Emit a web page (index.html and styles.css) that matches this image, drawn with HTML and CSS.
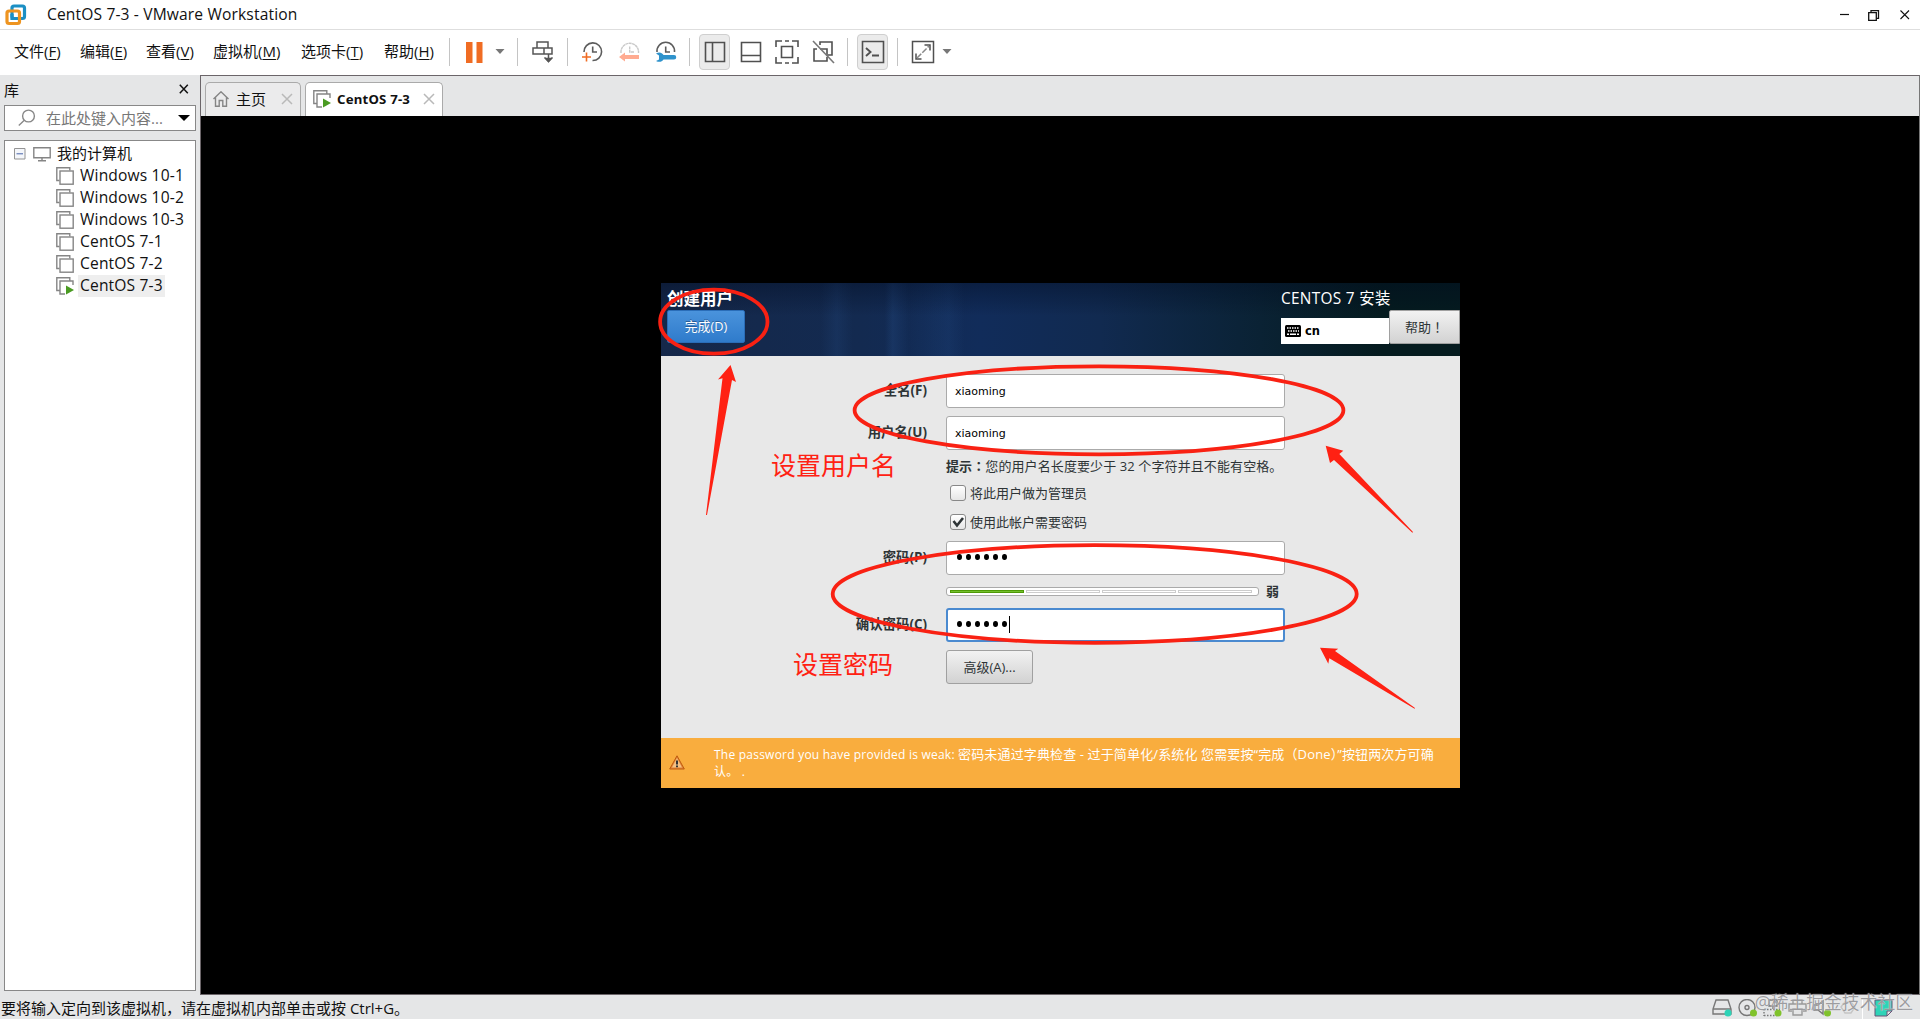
FILE: index.html
```html
<!DOCTYPE html>
<html lang="zh-CN">
<head>
    <meta charset="UTF-8">
    <meta name="viewport" content="width=device-width, initial-scale=1.0">
    <title>CentOS 7-3 - VMware Workstation</title>
    <link rel="stylesheet" href="styles.css">
</head>
<body>
    <svg width="0" height="0" class="defs">
        <symbol id="vm" viewBox="0 0 18 18">
            <path d="M3.5 13.5H.8V.8h13v2.7" fill="none" stroke="#858585" stroke-width="1.4"/>
            <rect x="4" y="4" width="13.2" height="13.2" fill="#fff" stroke="#858585" stroke-width="1.4"/>
        </symbol>
        <symbol id="vm-on" viewBox="0 0 18 18">
            <path d="M3.5 13.5H.8V.8h13v2.7M9 17H4V4h13v4" fill="none" stroke="#858585" stroke-width="1.4"/>
            <path d="M10 8.5l8 4.5-8 4.5z" fill="#4a9b22"/>
        </symbol>
    </svg>

    <header class="titlebar">
        <svg class="logo" width="22" height="22" viewBox="0 0 22 22" fill="none" stroke-width="3.2">
            <rect x="7" y="2" width="12.5" height="12.5" rx="2" stroke="#1b8fc4"/>
            <rect x="2" y="7" width="12.5" height="12.5" rx="2" stroke="#ee9420"/>
            <path d="M7 10v4.500h5" stroke="#1b8fc4"/>
        </svg>
        <span class="title">CentOS 7-3 - VMware Workstation</span>
        <svg class="window-btns" width="72" height="14" viewBox="0 0 72 14" fill="none" stroke="#111">
            <path d="M0 6.500h9" stroke-width="1.2"/>
            <path d="M28.700 4.700h7.600v7.600h-7.600zM31 4.500V2.700h7.500v7.600h-2" stroke-width="1.3"/>
            <path d="M60.500 2.500l8.500 8.500M69 2.500l-8.500 8.500" stroke-width="1.1"/>
        </svg>
    </header>

    <div class="menubar">
        <nav class="menu">
            <span class="m66">文件(<u>F</u>)</span>
            <span class="m66">编辑(<u>E</u>)</span>
            <span class="m67">查看(<u>V</u>)</span>
            <span class="m88">虚拟机(<u>M</u>)</span>
            <span class="m83">选项卡(<u>T</u>)</span>
            <span class="m65">帮助(<u>H</u>)</span>
        </nav>
        <div class="toolbar">
            <i class="sep"></i>
            <svg class="gap-16" width="17" height="21" fill="#f06c23"><path d="M0 0h6.500v21H0zM10.500 0h6v21h-6z"/></svg>
            <svg class="gap-12" width="10" height="6" fill="#777"><path d="M.5 0h9L5 5z"/></svg>
            <i class="sep gap-12"></i>
            <svg class="gap-14" width="22" height="22" fill="none" stroke="#555" stroke-width="1.5">
                <path d="M5 7V1h11v6M1 7h11v6H1zM12 7h8v6h-8M16.500 13v7M12.500 16.500l4 4 4-4"/>
                <path d="M14 17.500h5l-2.500 3z" fill="#555"/>
            </svg>
            <i class="sep gap-13"></i>
            <svg class="gap-14" width="22" height="22" fill="none" stroke="#5c5c5c" stroke-width="1.6">
                <path d="M2 11a8.800 8.800 0 1 1 8.500 8.500M10.700 5.500V11H15"/>
                <path d="M0 16h9M4.500 11.500v9" stroke="#f06c23"/>
            </svg>
            <svg class="gap-15" width="22" height="22" fill="none" stroke="#c9c9c9" stroke-width="1.4">
                <path d="M2 12a8.800 8.800 0 1 1 17.500 0M10.700 5.500V11H15" stroke-dasharray="3 .4"/>
                <path d="M0 16l6-4.500V14h14v4H6v2.500z" fill="#ffab91" stroke="none"/>
            </svg>
            <svg class="gap-14" width="22" height="22" fill="none" stroke="#5c5c5c" stroke-width="1.6">
                <path d="M2 11a8.800 8.800 0 1 1 17.500 0M10.700 5.500V11H15"/>
                <path d="M1 12.500c3-2 6-1 7.500 1.500H19a2 2 0 0 1 0 4.500H8.500c-1.500 2.500-4.500 3-7.500 1.500l3-1.500v-4z" fill="#2f93cc" stroke="none"/>
            </svg>
            <i class="sep gap-12"></i>
            <span class="pressed gap-9">
                <svg width="22" height="22" fill="none" stroke="#505050" stroke-width="1.6"><path d="M1.500 1.500h19v19h-19zM8.500 1.500v19"/></svg>
            </span>
            <svg class="gap-10" width="22" height="22" fill="none" stroke="#505050" stroke-width="1.6"><path d="M1.500 1.500h19v19h-19zM1.500 14.500h19"/></svg>
            <svg class="gap-13" width="24" height="24" fill="none" stroke="#505050" stroke-width="1.6"><path d="M1 7V1h6M10 1h4M17 1h6v6M23 17v6h-6M14 23h-4M7 23H1v-6M6.500 6.500h11v11h-11z"/></svg>
            <svg class="gap-13" width="23" height="24" fill="none" stroke="#505050" stroke-width="1.6">
                <path d="M8 5V2h12v13h-4M5 9H2v12h13v-4M8 9h7v7"/>
                <path d="M1 1l21 22" stroke="#777"/>
            </svg>
            <i class="sep gap-12"></i>
            <span class="pressed gap-9">
                <svg width="24" height="24" fill="none" stroke="#505050" stroke-width="1.6"><path d="M1.500 1.500h21v21h-21z"/><path d="M5 8l4.500 4L5 16M11 15.500h7" stroke-width="1.900"/></svg>
            </span>
            <i class="sep gap-9"></i>
            <svg class="gap-13" width="24" height="24" fill="none" stroke="#505050" stroke-width="1.5"><path d="M1.500 1.500h21v21h-21z"/><path d="M13.500 5h5.500v5.500M5 13.500V19h5.500"/><path d="M6 18L18 6" stroke="#888" stroke-dasharray="6 1.500"/></svg>
            <svg class="gap-7" width="10" height="6" fill="#777"><path d="M.5 0h9L5 5z"/></svg>
        </div>
    </div>

    <div class="workspace">
        <aside class="sidebar">
            <div class="side-head">
                <span>库</span>
                <svg width="10" height="10" stroke="#111" stroke-width="1.5"><path d="M.8.8l8 8.400M8.800.8l-8 8.400"/></svg>
            </div>
            <div class="search">
                <svg width="18" height="18" fill="none" stroke="#888" stroke-width="1.4"><circle cx="10.500" cy="7" r="5.900"/><path d="M6.300 11.300L.8 16.500"/></svg>
                <span>在此处键入内容...</span>
                <svg class="drop" width="12" height="6"><path d="M0 0h12L6 6z"/></svg>
            </div>
            <div class="tree">
                <div class="node root">
                    <svg width="12" height="12" fill="#f4f6fa" stroke="#949494"><path d="M.5.5h10.500v10.500H.5z"/><path d="M2.500 5.800h6.500" stroke="#4864a8"/></svg>
                    <svg class="pc" width="18" height="15" fill="none" stroke="#858585" stroke-width="1.4"><path d="M.8.8h16.400v10H.8zM9 11v2.500M5 13.800h8"/></svg>
                    <span>我的计算机</span>
                </div>
                <div class="node"><svg width="18" height="18"><use href="#vm"/></svg><span>Windows 10-1</span></div>
                <div class="node"><svg width="18" height="18"><use href="#vm"/></svg><span>Windows 10-2</span></div>
                <div class="node"><svg width="18" height="18"><use href="#vm"/></svg><span>Windows 10-3</span></div>
                <div class="node"><svg width="18" height="18"><use href="#vm"/></svg><span>CentOS 7-1</span></div>
                <div class="node"><svg width="18" height="18"><use href="#vm"/></svg><span>CentOS 7-2</span></div>
                <div class="node"><svg width="18" height="18"><use href="#vm-on"/></svg><span class="selected">CentOS 7-3</span></div>
            </div>
        </aside>

        <main class="main">
            <div class="tabs">
                <div class="tab home">
                    <svg width="16" height="16" fill="none" stroke="#858585" stroke-width="1.4"><path d="M.5 8L8 .8 15.500 8M2.500 6.500v8.700h3.700V9.500h3.600v5.700h3.700V6.500"/></svg>
                    <span>主页</span>
                    <svg class="x" width="12" height="12" stroke="#b9b9b9" stroke-width="1.500"><path d="M1 1l10 10M11 1L1 11"/></svg>
                </div>
                <div class="tab active">
                    <svg width="18" height="18"><use href="#vm-on"/></svg>
                    <span>CentOS 7-3</span>
                    <svg class="x" width="12" height="12" stroke="#b9b9b9" stroke-width="1.500"><path d="M1 1l10 10M11 1L1 11"/></svg>
                </div>
            </div>

            <div class="screen">
                <div class="installer">
                    <div class="banner">
                        <div class="banner-left">
                            <h1>创建用户</h1>
                            <button class="done">完成(D)</button>
                        </div>
                        <div class="banner-right">
                            <div class="product">CENTOS 7 安装</div>
                            <div class="lang-row">
                                <div class="layout">
                                    <svg width="16" height="12"><rect width="16" height="12" rx="1.500"/><path d="M2 3h12M3 6h11" stroke="#fff" stroke-width="1.600" stroke-dasharray="1.500 1"/><path d="M2 9.300h2M5 9.300h6M12 9.300h2" stroke="#fff" stroke-width="1.500"/></svg>
                                    <b>cn</b>
                                </div>
                                <button class="help">帮助<span class="mid" lang="zh-TW">！</span></button>
                            </div>
                        </div>
                    </div>

                    <div class="form">
                        <div class="row"><label>全名(F)</label><div class="input">xiaoming</div></div>
                        <div class="row user"><label>用户名(U)</label><div class="input">xiaoming</div></div>
                        <p class="hint"><b>提示<span class="mid" lang="zh-TW">：</span></b>您的用户名长度要少于 32 个字符并且不能有空格。</p>
                        <div class="check"><i></i><span>将此用户做为管理员</span></div>
                        <div class="check second">
                            <i><svg width="14" height="14" fill="none" stroke="#2e3436" stroke-width="2.600"><path d="M2.500 6l3.500 4.500L12 3"/></svg></i>
                            <span>使用此帐户需要密码</span>
                        </div>
                        <div class="row pass"><label>密码(P)</label><div class="input dots"><s></s><s></s><s></s><s></s><s></s><s></s></div></div>
                        <div class="strength">
                            <div class="meter"><i class="on"></i><i></i><i></i><i></i></div>
                            <b>弱</b>
                        </div>
                        <div class="row confirm"><label>确认密码(C)</label><div class="input dots focus"><s></s><s></s><s></s><s></s><s></s><s></s><em></em></div></div>
                        <button class="advanced">高级(A)...</button>
                    </div>

                    <div class="warning">
                        <svg width="16" height="15"><path d="M8 .8L15.300 14H.7z" fill="#e58634" stroke="#bd5b13"/><path d="M8 3l5 9.500H3z" fill="#f3c084"/><path d="M7 5.500h2v4H7zM7 10.500h2v1.800H7z" fill="#333"/></svg>
                        <p>The password you have provided is weak: <span class="zh">密码未通过字典检查 - 过于简单化/系统化 您需要按“完成（Done）”按钮两次方可确</span><br>认。 .</p>
                    </div>
                </div>

                <!-- hand-drawn marks over the guest screen -->
                <svg class="marks" width="760" height="440" viewBox="655 283 760 440">
                    <g fill="none" stroke="#f92113" stroke-width="3.800">
                        <ellipse cx="713.800" cy="321.700" rx="53.700" ry="32"/>
                        <ellipse cx="1099" cy="410.300" rx="244.400" ry="44"/>
                        <ellipse cx="1094.700" cy="594" rx="262" ry="48.800"/>
                    </g>
                    <g fill="#ff2113">
                        <path d="M730.500 365L718 379.500l4.500-1.200L706 515h1L732 380l4 2z"/>
                        <path d="M1325.700 445.700l17.600 5-4 3.300 73.700 78-.6.700L1334 460l-4 3z"/>
                        <path d="M1320 647.700l18.300 1-3.300 2.300 80 57-.4.700-85.300-50.400-1 5.400z"/>
                    </g>
                </svg>
                <span class="note note-user">设置用户名</span>
                <span class="note note-pass">设置密码</span>
            </div>
        </main>
    </div>

    <footer class="statusbar">
        <span>要将输入定向到该虚拟机，请在虚拟机内部单击或按 Ctrl+G。</span>
        <div class="devices">
            <svg width="21" height="18" fill="none" stroke="#777" stroke-width="1.400"><path d="M4 1h12l3 9v5H1v-5zM1 10h18"/><circle cx="16" cy="14" r="3.500" fill="#2ed3b7" stroke="none"/></svg>
            <svg width="20" height="18" fill="none" stroke="#777" stroke-width="1.400"><circle cx="9" cy="8.500" r="8"/><circle cx="9" cy="8.500" r="2"/><circle cx="15.500" cy="14" r="3.500" fill="#80c22c" stroke="none"/></svg>
            <svg width="20" height="18" fill="none" stroke="#777" stroke-width="1.400"><path d="M6 1h8v6H6zM10 7v3"/><path d="M1 10.500h16M1 16.500h13M1 10v7" stroke-dasharray="1.500 1.500"/><circle cx="15" cy="14" r="3.500" fill="#80c22c" stroke="none"/></svg>
            <svg width="20" height="18" fill="none" stroke="#999" stroke-width="1.400"><path d="M5 5V1h9v4M4 12H1V5h17v7h-3M5 10h9v6H5z"/></svg>
            <svg width="20" height="18" fill="none" stroke="#777" stroke-width="1.400"><path d="M1 6h4l5-4v13l-5-4H1z"/><circle cx="14.500" cy="14" r="3.500" fill="#80c22c" stroke="none"/></svg>
            <svg width="20" height="18" fill="none" stroke="#c5c5c5" stroke-width="1.400"><path d="M3 8l4-5h6l4 5-4 6H7z"/></svg>
            <i></i>
            <svg width="19" height="18" fill="#2ed3b7" stroke="#657" stroke-width="1"><path d="M1 1h17v11l-5 5H1zM18 12h-5v5"/></svg>
        </div>
        <span class="watermark"><span>@</span>稀土掘金技术社区</span>
    </footer>
</body>
</html>
```

FILE: styles.css
```css
* { box-sizing: border-box; }
body{
    margin: 0;
    width: 1920px;
    height: 1019px;
    overflow: hidden;
    display: flex;
    flex-direction: column;
    background-color: #e5e6e7;
    color: #111;
    font-family: "Open Sans", "Noto Sans CJK SC", sans-serif;
    font-size: 15px;
    white-space: nowrap;
}
svg{
    display: block;
    flex: none;
}
button{
    padding: 0;
    font-family: inherit;
}
.defs { position: absolute; }

/* title */
.titlebar{
    height: 30px;
    display: flex;
    align-items: center;
    padding: 0 8px 0 5px;
    background-color: #fff;
    border-bottom: 1px solid #dedede;
}
.title{
    margin-left: 20px;
    padding-bottom: 2px;
    font-size: 15.6px;
    letter-spacing: .14px;
}
.window-btns { margin-left: auto; }

/* menu + toolbar */
.menubar{
    height: 45px;
    display: flex;
    background-color: #fff;
}
.menu{
    display: flex;
    align-items: center;
    padding: 0 0 4px 14px;
}
.menu u { text-underline-offset: 2px; }
.m66 { width: 66px; }
.m67 { width: 67px; }
.m88 { width: 88px; }
.m83 { width: 83px; }
.m65 { width: 65px; }
.toolbar{
    display: flex;
    align-items: center;
    height: 44px;
}
.sep{
    width: 1px;
    height: 28px;
    background-color: #c4c4c4;
}
.gap-7 { margin-left: 7px; }
.gap-9 { margin-left: 9px; }
.gap-10 { margin-left: 10px; }
.gap-12 { margin-left: 12px; }
.gap-13 { margin-left: 13px; }
.gap-14 { margin-left: 14px; }
.gap-15 { margin-left: 15px; }
.gap-16 { margin-left: 16px; }
.pressed{
    width: 31px;
    height: 36px;
    display: flex;
    align-items: center;
    justify-content: center;
    background-color: #ebebeb;
    border: 1px solid #cfcfcf;
    border-radius: 4px;
}

.workspace{
    flex: 1;
    display: flex;
    min-height: 0;
}

/* library */
.sidebar{
    width: 200px;
    display: flex;
    flex-direction: column;
    padding: 0 4px 4px 4px;
}
.side-head{
    height: 30px;
    display: flex;
    align-items: center;
    justify-content: space-between;
    padding: 0 7px 2px 0;
}
.search{
    height: 26px;
    display: flex;
    align-items: center;
    padding: 0 5px 0 13px;
    background-color: #fff;
    border: 1px solid #888;
    color: #777;
}
.search span{
    margin-left: 10px;
    padding-bottom: 2px;
}
.drop { margin-left: auto; }
.tree{
    flex: 1;
    width: 192px;
    margin-top: 9px;
    padding-top: 2px;
    background-color: #fff;
    border: 1px solid #888;
}
.node{
    height: 22px;
    display: flex;
    align-items: center;
    padding-left: 51px;
    font-size: 15.6px;
    letter-spacing: .15px;
}
.node span{
    height: 22px;
    line-height: 21px;
    margin-left: 4px;
    padding: 0 2px;
}
.node.root{
    padding-left: 9px;
    font-size: 15px;
    letter-spacing: 0;
}
.pc { margin-left: 7px; }
.node .selected { background-color: #eee; }

/* tabs */
.main{
    flex: 1;
    display: flex;
    flex-direction: column;
    border: 1px solid #6b6569;
    border-right: 1px solid #777;
}
.tabs{
    height: 40px;
    display: flex;
    align-items: flex-end;
    padding-left: 4px;
}
.tab{
    height: 34px;
    display: flex;
    align-items: center;
    padding-bottom: 2px;
    border: 1px solid #aaa;
    border-bottom: none;
    border-radius: 5px 5px 0 0;
}
.home{
    width: 96px;
    padding-left: 7px;
    padding-right: 7px;
    background-color: #ebebec;
}
.home span { margin-left: 7px; }
.active{
    width: 138px;
    margin-left: 4px;
    padding-left: 7px;
    padding-right: 7px;
    background-color: #fff;
}
.active span{
    margin-left: 6px;
    font-family: "Noto Sans", sans-serif;
    font-size: 13.2px;
    font-weight: 700;
    letter-spacing: .2px;
}
.x { margin-left: auto; }

/* guest screen */
.screen{
    position: relative;
    flex: 1;
    padding: 167px 0 0 460px;
    background-color: #000;
}
.installer{
    width: 799px;
    height: 505px;
    display: flex;
    flex-direction: column;
    background-color: #e8e8e8;
    color: #2e3436;
    font-size: 13px;
    line-height: 18px;
}
.mid { font-family: "Noto Sans CJK TC", sans-serif; }
.banner{
    height: 73px;
    display: flex;
    justify-content: space-between;
    background:
        linear-gradient(rgba(0,10,30,.4), transparent 45%),
        linear-gradient(90deg, transparent 20%, rgba(50,100,170,.14) 22%, transparent 24%, transparent 28%, rgba(50,100,170,.18) 29%, transparent 31%, rgba(50,100,170,.12) 36%, transparent 38%),
        linear-gradient(90deg, #15284a, #132a50 25%, #112c5a 40%, #112a50 55%, #0a2234 75%, #051b1f 90%);
}
.banner-left { padding: 5px 0 0 6px; }
.banner h1{
    margin: 0;
    color: #fff;
    font-size: 16.5px;
    line-height: 22px;
}
.done{
    display: block;
    width: 78px;
    height: 33px;
    padding-bottom: 2px;
    border: 1px solid #2a6db8;
    border-radius: 2px;
    background: linear-gradient(#4a93dc, #2f7bcb);
    color: #fff;
    font-size: 12.8px;
    text-shadow: 0 -1px #2a5f9b;
}
.banner-right { width: 179px; }
.product{
    height: 27px;
    padding-top: 6px;
    color: #fff;
    font-size: 15.4px;
    line-height: 19px;
    letter-spacing: .3px;
}
.lang-row{
    display: flex;
    align-items: flex-end;
    height: 34px;
}
.layout{
    width: 108px;
    height: 26px;
    display: flex;
    align-items: center;
    padding-left: 4px;
    background-color: #fff;
    color: #000;
}
.layout b{
    margin-left: 4px;
    font-family: "DejaVu Sans", sans-serif;
    font-size: 11.5px;
}
.help, .advanced{
    border: 1px solid #a0a0a0;
    background: linear-gradient(#f2f2f2, #d2d2d2);
    color: #2e3436;
    font-size: 13px;
    padding-bottom: 2px;
}
.help{
    width: 71px;
    height: 34px;
    border-radius: 2px 0 0 2px;
}

/* form */
.form{
    height: 382px;
    padding-top: 18px;
}
.row{
    display: flex;
    align-items: center;
    height: 34px;
}
.row label{
    width: 266px;
    margin-right: 19px;
    padding-bottom: 2px;
    text-align: right;
    font-weight: 700;
    font-size: 13.4px;
}
.input{
    width: 339px;
    height: 34px;
    padding-left: 8px;
    border: 1px solid #aaa;
    border-radius: 3px;
    background-color: #fff;
    color: #000;
    font-family: "DejaVu Sans", sans-serif;
    font-size: 11px;
    line-height: 34px;
}
.user { margin-top: 8px; }
.hint{
    margin: 7px 0 0 285px;
    letter-spacing: .1px;
}
.check{
    display: flex;
    align-items: center;
    height: 16px;
    margin: 10px 0 0 289px;
}
.check i{
    width: 16px;
    height: 16px;
    margin-right: 4px;
    border: 1px solid #888;
    border-radius: 3px;
    background: linear-gradient(#fff, #e6e6e6);
}
.second { margin-top: 13px; }
.pass { margin-top: 11px; }
.dots{
    display: flex;
    align-items: center;
    gap: 3.800px;
    padding: 0 0 2px 10px;
}
.dots s{
    width: 5.200px;
    height: 6.500px;
    border-radius: 50%;
    background-color: #000;
}
.focus{
    border: 2px solid #4a8ad0;
    padding-left: 9px;
}
.focus em{
    width: 1px;
    height: 17px;
    margin-left: -2px;
    background-color: #000;
}
.strength{
    display: flex;
    align-items: center;
    height: 9px;
    margin: 12px 0 0 285px;
}
.meter{
    width: 313px;
    height: 9px;
    display: flex;
    align-items: center;
    gap: 2px;
    padding: 0 6px 0 3px;
    border: 1px solid #aaa;
    border-radius: 3px;
    background-color: #fff;
}
.meter i{
    flex: 1;
    height: 3px;
    border: 1px solid #ccc;
}
.meter .on{
    border-color: #4e9a06;
    background-color: #73c02c;
}
.strength b{
    margin-left: 7px;
    padding-bottom: 2px;
}
.confirm { margin-top: 12px; }
.advanced{
    display: block;
    width: 87px;
    height: 34px;
    margin: 8px 0 0 285px;
    border-radius: 3px;
}
.warning{
    height: 50px;
    display: flex;
    background-color: #f9ad3e;
    color: #fff;
    padding: 8px 0 0 8px;
}
.warning svg { margin-top: 9px; }
.warning p{
    margin: 0 0 0 29px;
    font-size: 12px;
    line-height: 17px;
    letter-spacing: .23px;
}
.warning .zh{
    font-size: 13px;
    letter-spacing: .13px;
}

.marks{
    position: absolute;
    left: 454px;
    top: 167px;
    overflow: visible;
}
.note{
    position: absolute;
    color: #ff2113;
    font-family: "Noto Sans CJK SC", sans-serif;
    font-size: 25px;
    line-height: 30px;
}
.note-user { left: 570px; top: 333px; }
.note-pass { left: 592px; top: 532px; }

/* status */
.statusbar{
    position: relative;
    height: 24px;
    display: flex;
    align-items: center;
    justify-content: space-between;
    padding: 2px 27px 0 1px;
    line-height: 20px;
}
.devices{
    display: flex;
    gap: 5px;
    padding-top: 1px;
}
.devices i{
    width: 1px;
    height: 20px;
    margin: 0 6px 0 -1px;
    background-color: #fff;
}
.watermark{
    position: absolute;
    right: 7px;
    top: -3px;
    display: flex;
    color: rgba(125,125,130,.75);
    font-size: 17.800px;
    text-shadow: 0 0 1px #fff;
}
```
